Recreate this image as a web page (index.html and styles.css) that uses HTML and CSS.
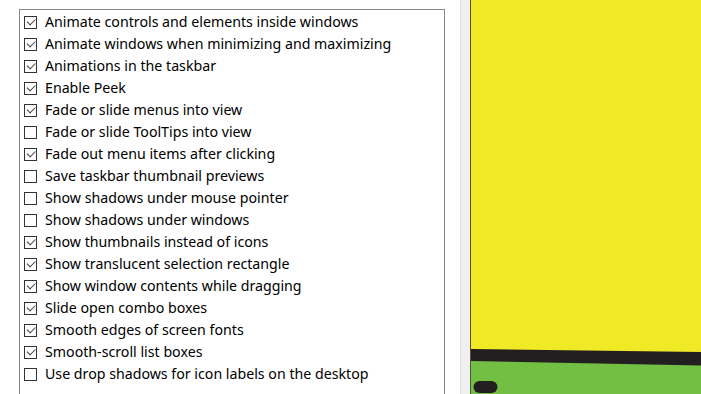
FILE: index.html
```html
<!DOCTYPE html>
<html>
<head>
<meta charset="utf-8">
<link rel="stylesheet" href="styles.css">
</head>
<body>
<div class="page">
  <div class="left">
    <ul class="list">
      <li class="row on"><span class="cb"></span><span class="lbl">Animate controls and elements inside windows</span></li>
      <li class="row on"><span class="cb"></span><span class="lbl">Animate windows when minimizing and maximizing</span></li>
      <li class="row on"><span class="cb"></span><span class="lbl">Animations in the taskbar</span></li>
      <li class="row on"><span class="cb"></span><span class="lbl">Enable Peek</span></li>
      <li class="row on"><span class="cb"></span><span class="lbl">Fade or slide menus into view</span></li>
      <li class="row"><span class="cb"></span><span class="lbl">Fade or slide ToolTips into view</span></li>
      <li class="row on"><span class="cb"></span><span class="lbl">Fade out menu items after clicking</span></li>
      <li class="row"><span class="cb"></span><span class="lbl">Save taskbar thumbnail previews</span></li>
      <li class="row"><span class="cb"></span><span class="lbl">Show shadows under mouse pointer</span></li>
      <li class="row"><span class="cb"></span><span class="lbl">Show shadows under windows</span></li>
      <li class="row on"><span class="cb"></span><span class="lbl">Show thumbnails instead of icons</span></li>
      <li class="row on"><span class="cb"></span><span class="lbl">Show translucent selection rectangle</span></li>
      <li class="row on"><span class="cb"></span><span class="lbl">Show window contents while dragging</span></li>
      <li class="row on"><span class="cb"></span><span class="lbl">Slide open combo boxes</span></li>
      <li class="row on"><span class="cb"></span><span class="lbl">Smooth edges of screen fonts</span></li>
      <li class="row on"><span class="cb"></span><span class="lbl">Smooth-scroll list boxes</span></li>
      <li class="row"><span class="cb"></span><span class="lbl">Use drop shadows for icon labels on the desktop</span></li>
    </ul>
  </div>
  <div class="strip"></div>
  <div class="art">
    <svg width="230" height="394" viewBox="0 0 230 394" xmlns="http://www.w3.org/2000/svg">
      <rect x="0" y="0" width="230" height="394" fill="#f0e926"/>
      <polygon points="0,349 230,352 230,394 0,394" fill="#231f20"/>
      <polygon points="0,361 230,365.5 230,394 0,394" fill="#72bf44"/>
      <rect x="2.5" y="381" width="24" height="12" rx="6" fill="#231f20"/>
    </svg>
  </div>
</div>
</body>
</html>
```
FILE: styles.css
```css
html, body {
  margin: 0;
  padding: 0;
  background: #ffffff;
  overflow: hidden;
}
.page {
  display: flex;
  width: 701px;
  height: 394px;
  font-family: "Noto Sans", "Open Sans", sans-serif;
  font-size: 14.2px;
  color: #000;
}
.left {
  width: 460px;
  flex: none;
  padding: 9px 0 0 19px;
  box-sizing: border-box;
}
.list {
  list-style: none;
  margin: 0;
  padding: 1px 0 0 4px;
  width: 426px;
  height: 400px;
  box-sizing: border-box;
  border: 1px solid #828790;
  border-bottom: none;
}
.row {
  display: flex;
  align-items: center;
  height: 22px;
  gap: 8px;
  white-space: nowrap;
}
.cb {
  width: 13px;
  height: 13px;
  box-sizing: border-box;
  border: 1px solid #333333;
  background: #fff;
  flex: none;
  position: relative;
}
.row.on .cb::after {
  content: "";
  position: absolute;
  left: 1.5px;
  top: 1.5px;
  width: 7px;
  height: 3.5px;
  border-left: 1px solid #404040;
  border-bottom: 1px solid #404040;
  transform: translate(0, 0.5px) rotate(-45deg);
  transform-origin: center;
}
.lbl {
  line-height: 22px;
}
.strip {
  width: 10px;
  flex: none;
  background: #f0f0f0;
  border-left: 1px solid #e2e2e2;
  box-sizing: border-box;
}
.art {
  flex: 1;
  border-left: 1px solid #54543a;
  overflow: hidden;
}
.art svg {
  display: block;
}
```
